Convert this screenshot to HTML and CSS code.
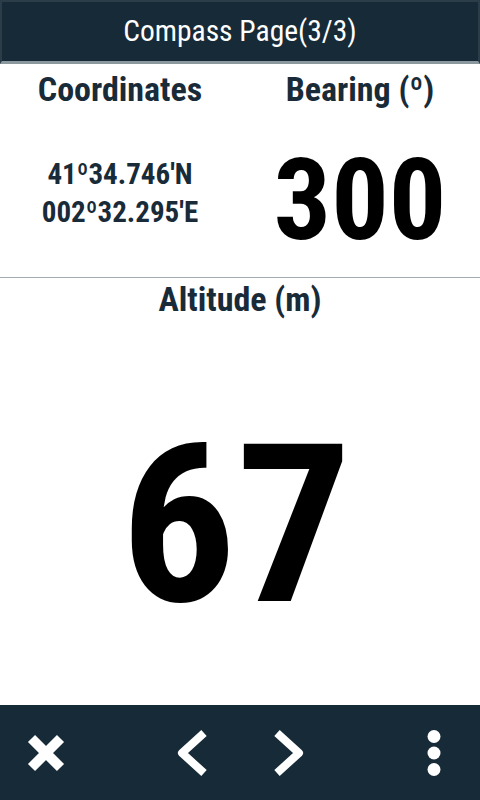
FILE: index.html
```html
<!DOCTYPE html>
<html lang="en">
<head>
  <meta charset="UTF-8" />
  <meta name="viewport" content="width=device-width, initial-scale=1.0"/>
  <title>Compass Page</title>
  <link rel="stylesheet" href="styles.css">
</head>
<body>
  <div class="screen">
    <header class="title-bar">
      <span class="title">Compass Page(3/3)</span>
    </header>

    <section class="top-row">
      <div class="field">
        <div class="label">Coordinates</div>
        <div class="coords">
          <span>41º34.746'N</span>
          <span>002º32.295'E</span>
        </div>
      </div>
      <div class="field">
        <div class="label">Bearing (º)</div>
        <div class="value bearing">300</div>
      </div>
    </section>

    <section class="altitude">
      <div class="label">Altitude (m)</div>
      <div class="value big">67</div>
    </section>

    <footer class="nav-bar">
      <button class="icon-btn close" aria-label="Close">
        <svg width="38" height="38" viewBox="0 0 38 38">
          <path d="M4.5 4.5 L33.5 33.5 M33.5 4.5 L4.5 33.5" stroke="#fff" stroke-width="10"/>
        </svg>
      </button>
      <div class="pager">
        <button class="icon-btn" aria-label="Previous">
          <svg width="34" height="48" viewBox="0 0 34 48">
            <path d="M29 4 L7 24 L29 44" fill="none" stroke="#fff" stroke-width="8" stroke-linejoin="round"/>
          </svg>
        </button>
        <button class="icon-btn" aria-label="Next">
          <svg width="34" height="48" viewBox="0 0 34 48">
            <path d="M5 4 L27 24 L5 44" fill="none" stroke="#fff" stroke-width="8" stroke-linejoin="round"/>
          </svg>
        </button>
      </div>
      <button class="icon-btn menu" aria-label="Menu">
        <svg width="14" height="48" viewBox="0 0 14 48">
          <circle cx="7" cy="7.5" r="6.5" fill="#fff"/>
          <circle cx="7" cy="24" r="6.5" fill="#fff"/>
          <circle cx="7" cy="40.5" r="6.5" fill="#fff"/>
        </svg>
      </button>
    </footer>
  </div>
</body>
</html>
```
FILE: styles.css
```css
* {
  margin: 0; padding: 0;
  box-sizing: border-box;
}
body {
  background-color: #fff;
  font-family: "Roboto Condensed", Roboto, sans-serif;
  font-stretch: condensed;
  color: #192b38;
}
.screen {
  width: 480px;
  height: 800px;
  display: flex;
  flex-direction: column;
}
.title-bar {
  height: 64px;
  background-color: #172a37;
  border: 2px solid #2b3d48;
  border-bottom: 3px solid #8b989d;
  display: flex;
  align-items: center;
  justify-content: center;
}
.title {
  color: #fff;
  font-size: 29.5px;
  padding-bottom: 2px;
}
.top-row {
  height: 214px;
  display: grid;
  grid-template-columns: 1fr 1fr;
  border-bottom: 1px solid #a3acb0;
}
.field {
  display: flex;
  flex-direction: column;
  align-items: center;
}
.label {
  font-size: 34px;
  font-weight: bold;
  margin-top: 5px;
}
.coords {
  margin-top: 46px;
  display: flex;
  flex-direction: column;
  align-items: center;
  font-size: 29px;
  font-weight: bold;
  line-height: 38px;
}
.value {
  color: #000;
  font-weight: bold;
}
.bearing {
  font-size: 114px;
  line-height: 114px;
  margin-top: 34px;
}
.altitude {
  flex: 1;
  display: flex;
  flex-direction: column;
  align-items: center;
}
.altitude .label {
  margin-top: 1px;
}
.big {
  font-size: 220px;
  line-height: 220px;
  margin: 97px 8px 0 0;
  transform: scaleX(1.04);
}
.nav-bar {
  height: 95px;
  background-color: #172a37;
  display: grid;
  grid-template-columns: 1fr auto 1fr;
  align-items: center;
  padding: 0 33px;
}
.close {
  justify-self: start;
  margin-left: -6px;
}
.menu {
  justify-self: end;
  margin-right: 6px;
}
.pager {
  display: flex;
  gap: 63px;
}
.icon-btn {
  background: none;
  border: none;
  display: flex;
  cursor: pointer;
}
```
